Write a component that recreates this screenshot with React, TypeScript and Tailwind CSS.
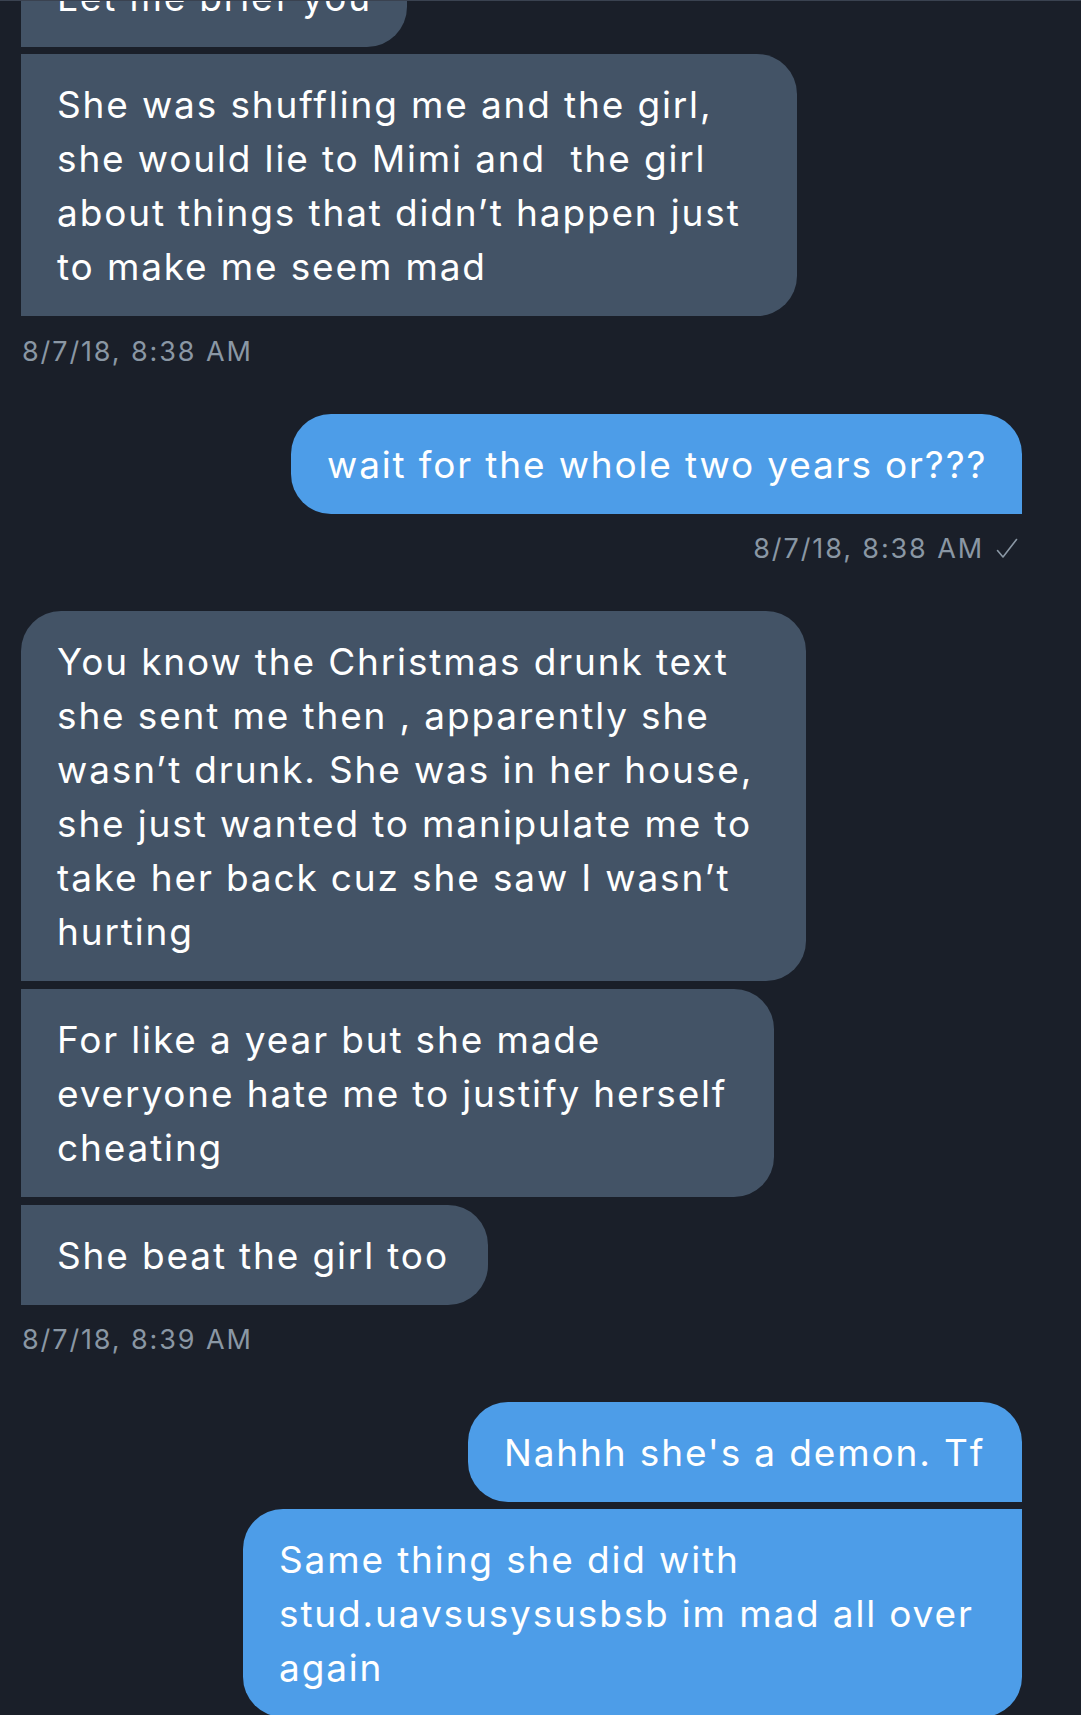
import React from "react";

type BubbleProps = {
  sent?: boolean;
  width: string;
  corners: string;
  mt: string;
  lines: string[];
};

function Bubble({ sent, width, corners, mt, lines }: BubbleProps) {
  return (
    <div
      className={
        (sent
          ? "self-end mr-[59px] bg-[#4d9de8] "
          : "self-start ml-[21px] bg-[#435366] ") +
        width +
        " " +
        corners +
        " " +
        mt +
        " shrink-0 pl-[36px] pt-[24px] pb-[22px] text-white text-[37px] leading-[54px] tracking-[0.05em]"
      }
    >
      {lines.map((l, i) => (
        <div key={i} className="whitespace-pre">
          {l}
        </div>
      ))}
    </div>
  );
}

function Check() {
  return (
    <svg width="22" height="22" viewBox="0 0 22 22" className="ml-[12px] mb-[1px]" fill="none">
      <polyline points="1.5,12.5 7,19 20.5,1.5" stroke="#8a97a4" strokeWidth="1.6" strokeLinecap="round" strokeLinejoin="round" />
    </svg>
  );
}

export default function App() {
  return (
    <div className="h-[1715px] w-full overflow-hidden bg-[#1a1f29] border-t border-[#3a4250] flex flex-col font-[Inter,sans-serif]">
      <Bubble
        width="w-[386px]"
        corners="rounded-tr-[40px] rounded-br-[40px] rounded-tl-[40px]"
        mt="mt-[-54px]"
        lines={["Let me brief you"]}
      />
      <Bubble
        width="w-[776px]"
        corners="rounded-tr-[40px] rounded-br-[40px]"
        mt="mt-[7px]"
        lines={[
          "She was shuffling me and the girl,",
          "she would lie to Mimi and  the girl",
          "about things that didn\u2019t happen just",
          "to make me seem mad",
        ]}
      />
      <div className="ml-[22px] mt-[20px] h-[32px] flex items-center text-[27px] tracking-[0.07em] text-[#8a97a4]">
        8/7/18, 8:38 AM
      </div>
      <Bubble
        sent
        width="w-[731px]"
        corners="rounded-tl-[40px] rounded-tr-[40px] rounded-bl-[40px]"
        mt="mt-[46px]"
        lines={["wait for the whole two years or???"]}
      />
      <div className="self-end mr-[63px] mt-[19px] h-[32px] flex items-center text-[27px] tracking-[0.07em] text-[#8a97a4]">
        <span>8/7/18, 8:38 AM</span>
        <Check />
      </div>
      <Bubble
        width="w-[785px]"
        corners="rounded-tl-[40px] rounded-tr-[40px] rounded-br-[40px]"
        mt="mt-[46px]"
        lines={[
          "You know the Christmas drunk text",
          "she sent me then , apparently she",
          "wasn\u2019t drunk. She was in her house,",
          "she just wanted to manipulate me to",
          "take her back cuz she saw I wasn\u2019t",
          "hurting",
        ]}
      />
      <Bubble
        width="w-[753px]"
        corners="rounded-tr-[40px] rounded-br-[40px]"
        mt="mt-[8px]"
        lines={[
          "For like a year but she made",
          "everyone hate me to justify herself",
          "cheating",
        ]}
      />
      <Bubble
        width="w-[467px]"
        corners="rounded-tr-[40px] rounded-br-[40px]"
        mt="mt-[8px]"
        lines={["She beat the girl too"]}
      />
      <div className="ml-[22px] mt-[19px] h-[32px] flex items-center text-[27px] tracking-[0.07em] text-[#8a97a4]">
        8/7/18, 8:39 AM
      </div>
      <Bubble
        sent
        width="w-[554px]"
        corners="rounded-tl-[40px] rounded-tr-[40px] rounded-bl-[40px]"
        mt="mt-[46px]"
        lines={["Nahhh she's a demon. Tf"]}
      />
      <Bubble
        sent
        width="w-[779px]"
        corners="rounded-tl-[40px] rounded-bl-[40px] rounded-br-[40px]"
        mt="mt-[7px]"
        lines={[
          "Same thing she did with",
          "stud.uavsusysusbsb im mad all over",
          "again",
        ]}
      />
    </div>
  );
}
